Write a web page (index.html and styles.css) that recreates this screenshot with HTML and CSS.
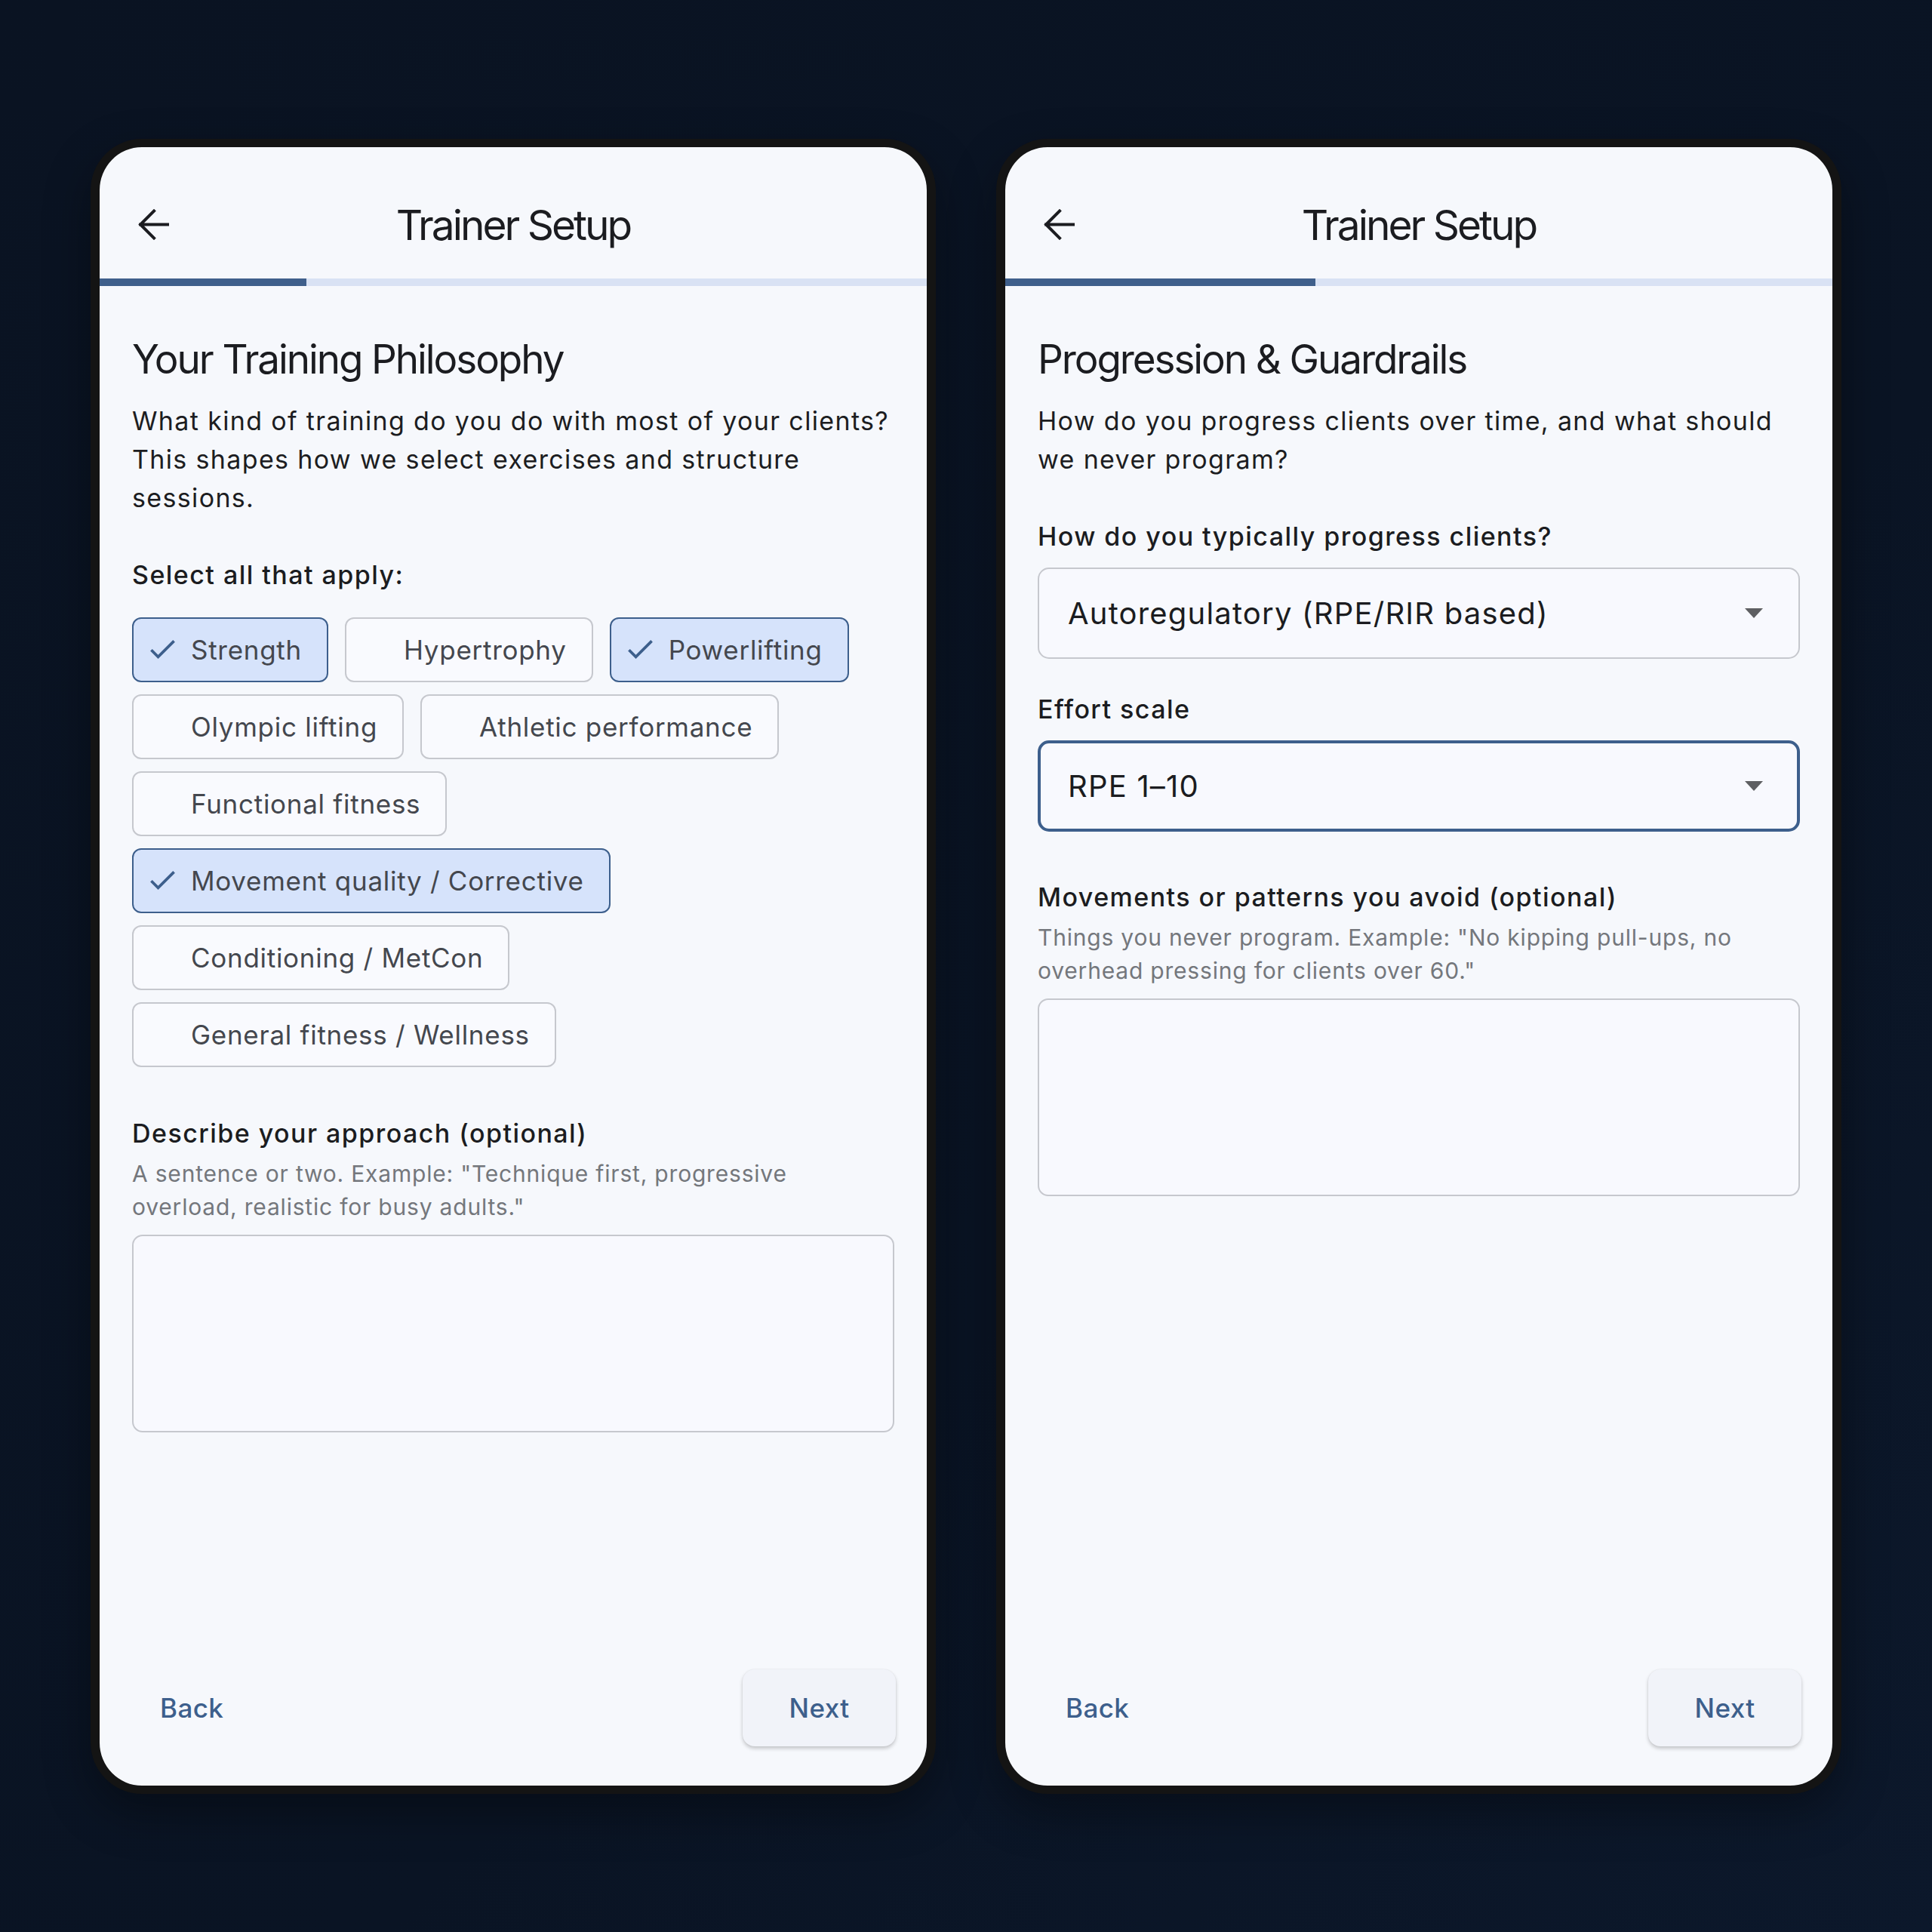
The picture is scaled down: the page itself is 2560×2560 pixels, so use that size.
FILE: index.html
```html
<!DOCTYPE html>
<html lang="en">
<head>
<meta charset="utf-8">
<title>Trainer Setup</title>
<link rel="stylesheet" href="styles.css">
</head>
<body>
  <div class="phone">
    <div class="appbar">
      <div class="appbar-lead">
        <svg class="back-icon" viewBox="4 4 16 16" width="41" height="41"><path d="M19.6 12H5.2M12.2 5 5.2 12l7 7" fill="none" stroke="#1b1c20" stroke-width="1.55" stroke-linecap="square"/></svg>
      </div>
      <div class="appbar-title">Trainer Setup</div>
      <div></div>
    </div>
    <div class="progress"><div class="progress-fill" style="width:25%"></div></div>
    <div class="content">
      <h1 class="heading">Your Training Philosophy</h1>
      <p class="lead">What kind of training do you do with most of your clients? This shapes how we select exercises and structure sessions.</p>
      <div class="label label-select">Select all that apply:</div>
      <div class="chips">
        <div class="chip selected"><span class="chip-icon"><svg viewBox="3.41 5.59 17.59 13.41" width="33" height="25"><path d="M9 16.17 4.83 12l-1.42 1.41L9 19 21 7l-1.41-1.41z" fill="#3d5f8c"/></svg></span><span>Strength</span></div>
        <div class="chip"><span class="chip-icon"></span><span>Hypertrophy</span></div>
        <div class="chip selected"><span class="chip-icon"><svg viewBox="3.41 5.59 17.59 13.41" width="33" height="25"><path d="M9 16.17 4.83 12l-1.42 1.41L9 19 21 7l-1.41-1.41z" fill="#3d5f8c"/></svg></span><span>Powerlifting</span></div>
        <div class="chip"><span class="chip-icon"></span><span>Olympic lifting</span></div>
        <div class="chip"><span class="chip-icon"></span><span>Athletic performance</span></div>
        <div class="chip"><span class="chip-icon"></span><span>Functional fitness</span></div>
        <div class="chip selected"><span class="chip-icon"><svg viewBox="3.41 5.59 17.59 13.41" width="33" height="25"><path d="M9 16.17 4.83 12l-1.42 1.41L9 19 21 7l-1.41-1.41z" fill="#3d5f8c"/></svg></span><span>Movement quality / Corrective</span></div>
        <div class="chip"><span class="chip-icon"></span><span>Conditioning / MetCon</span></div>
        <div class="chip"><span class="chip-icon"></span><span>General fitness / Wellness</span></div>
      </div>
      <div class="label label-after-chips">Describe your approach (optional)</div>
      <p class="hint">A sentence or two. Example: "Technique first, progressive overload, realistic for busy adults."</p>
      <div class="textarea"></div>
    </div>
    <div class="footer">
      <button class="btn btn-text">Back</button>
      <button class="btn btn-elevated">Next</button>
    </div>
  </div>

  <div class="phone">
    <div class="appbar">
      <div class="appbar-lead">
        <svg class="back-icon" viewBox="4 4 16 16" width="41" height="41"><path d="M19.6 12H5.2M12.2 5 5.2 12l7 7" fill="none" stroke="#1b1c20" stroke-width="1.55" stroke-linecap="square"/></svg>
      </div>
      <div class="appbar-title">Trainer Setup</div>
      <div></div>
    </div>
    <div class="progress"><div class="progress-fill" style="width:37.5%"></div></div>
    <div class="content">
      <h1 class="heading">Progression &amp; Guardrails</h1>
      <p class="lead">How do you progress clients over time, and what should we never program?</p>
      <div class="label label-select">How do you typically progress clients?</div>
      <div class="dropdown"><span>Autoregulatory (RPE/RIR based)</span><span class="caret"></span></div>
      <div class="label label-after-dd">Effort scale</div>
      <div class="dropdown focused"><span>RPE 1–10</span><span class="caret"></span></div>
      <div class="label label-after-dd2">Movements or patterns you avoid (optional)</div>
      <p class="hint">Things you never program. Example: "No kipping pull-ups, no overhead pressing for clients over 60."</p>
      <div class="textarea"></div>
    </div>
    <div class="footer">
      <button class="btn btn-text">Back</button>
      <button class="btn btn-elevated">Next</button>
    </div>
  </div>
</body>
</html>
```

FILE: styles.css
```css
* { box-sizing: border-box; margin: 0; padding: 0; }

html, body { width: 2560px; height: 2560px; }

body {
  background: linear-gradient(135deg, #0a1322 0%, #0a1424 60%, #0c182b 100%);
  font-family: Inter, "Noto Sans", "Liberation Sans", sans-serif;
  display: flex;
  align-items: center;
  justify-content: center;
  gap: 80px;
  color: #1b1c20;
}

.phone {
  width: 1120px;
  height: 2193px;
  border: 12px solid #141414;
  border-top-width: 11px;
  border-bottom-width: 11px;
  border-radius: 68px;
  background: #f6f8fc;
  overflow: hidden;
  display: flex;
  flex-direction: column;
  box-shadow: 0 24px 60px rgba(0, 0, 0, 0.35);
}

.appbar {
  height: 174px;
  padding-top: 32px;
  display: grid;
  grid-template-columns: 1fr auto 1fr;
  align-items: center;
}

.appbar-lead { display: flex; align-items: center; padding-left: 51px; }
.back-icon { display: block; }

.appbar-title {
  font-size: 55px;
  font-weight: 400;
  line-height: 68px;
  letter-spacing: -3px;
  color: #1b1c20;
}

.progress { height: 10px; background: #d9e2f4; flex: none; }
.progress-fill { height: 100%; background: #3f5f8b; }

.content {
  padding: 0 43px;
  display: flex;
  flex-direction: column;
}

.heading {
  margin-top: 65px;
  font-size: 53px;
  font-weight: 400;
  line-height: 64px;
  letter-spacing: -2.1px;
  color: #1b1c20;
}

.lead {
  margin-top: 24px;
  font-size: 34px;
  line-height: 51px;
  letter-spacing: 1.35px;
  color: #1c1d21;
}

.label {
  font-size: 34px;
  font-weight: 500;
  line-height: 48px;
  letter-spacing: 1.45px;
  color: #1b1c20;
}

.label-select { margin-top: 53px; }
.label-after-chips { margin-top: 64px; }
.label-after-dd { margin-top: 43px; }
.label-after-dd2 { margin-top: 63px; }

.chips {
  margin-top: 32px;
  display: flex;
  flex-wrap: wrap;
  column-gap: 22px;
  row-gap: 16px;
}

.chip {
  height: 86px;
  display: inline-flex;
  align-items: center;
  padding: 0 33px 0 22px;
  border: 2px solid #c6c8ce;
  border-radius: 12px;
  background: #f9fafe;
  font-size: 35px;
  letter-spacing: 0.72px;
  color: #44474e;
  white-space: nowrap;
}

.chip.selected {
  background: #d6e3fb;
  border-color: #3d5f8c;
}

.chip-icon {
  width: 33px;
  height: 25px;
  margin-right: 21px;
  display: flex;
  flex: none;
}
.chip-icon svg { display: block; }

.hint {
  margin-top: 7px;
  font-size: 30px;
  line-height: 44px;
  letter-spacing: 0.8px;
  color: #74777c;
}

.textarea {
  margin-top: 15px;
  height: 262px;
  border: 2px solid #c6c8ce;
  border-radius: 14px;
  background: #f8f9fe;
}

.dropdown {
  margin-top: 17px;
  height: 121px;
  border: 2px solid #c6c8ce;
  border-radius: 15px;
  background: #f8f9fe;
  display: flex;
  align-items: center;
  justify-content: space-between;
  padding: 0 47px 0 38px;
  font-size: 40px;
  letter-spacing: 1.2px;
  color: #1b1c20;
}

.dropdown.focused {
  border: 4px solid #3d5f8c;
  padding: 0 45px 0 36px;
}

.caret {
  width: 0;
  height: 0;
  border-left: 12px solid transparent;
  border-right: 12px solid transparent;
  border-top: 13px solid #5e5f62;
}

.footer {
  margin-top: auto;
  display: flex;
  justify-content: space-between;
  align-items: center;
  padding: 0 41px 52px;
}

.btn {
  height: 102px;
  border: none;
  font-family: inherit;
  font-size: 35px;
  font-weight: 500;
  letter-spacing: 0.4px;
  color: #3d5f8c;
  background: transparent;
  border-radius: 16px;
}

.btn-text { padding: 0 39px; }

.btn-elevated {
  width: 203px;
  background: #f1f3f9;
  box-shadow: 0 3px 5px rgba(0, 0, 0, 0.2), 0 0 2px rgba(0, 0, 0, 0.08);
}
```
